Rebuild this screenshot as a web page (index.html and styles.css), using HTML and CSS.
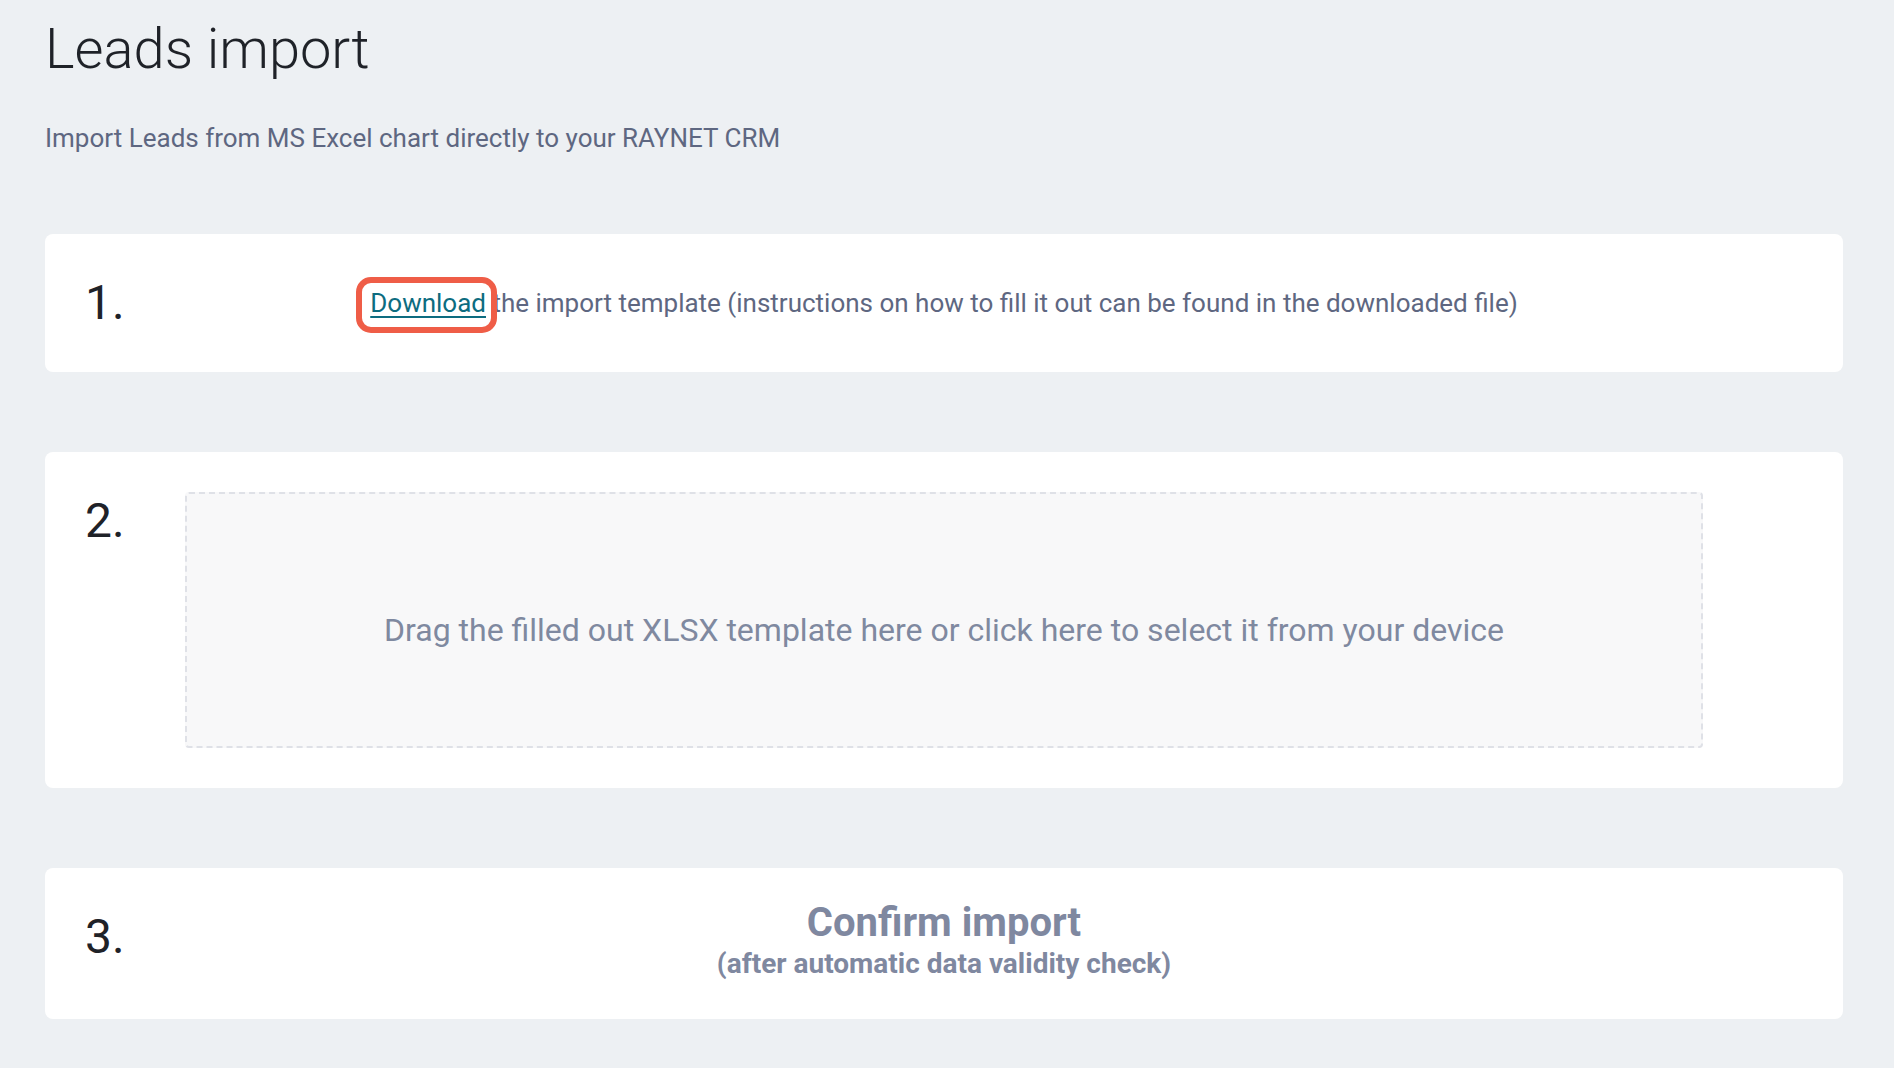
FILE: index.html
```html
<!DOCTYPE html>
<html lang="en">
<head>
<meta charset="utf-8">
<title>Leads import</title>
<link rel="stylesheet" href="styles.css">
</head>
<body>
<main class="page">
  <h1 class="title">Leads import</h1>
  <p class="subtitle">Import Leads from MS Excel chart directly to your RAYNET CRM</p>

  <section class="card card-download">
    <div class="step">1.</div>
    <div class="content">
      <p class="download-text"><span class="highlight"><a class="link" href="#">Download</a></span> the import template (instructions on how to fill it out can be found in the downloaded file)</p>
    </div>
  </section>

  <section class="card card-upload">
    <div class="step">2.</div>
    <div class="content">
      <div class="dropzone">Drag the filled out XLSX template here or click here to select it from your device</div>
    </div>
  </section>

  <section class="card card-confirm">
    <div class="step">3.</div>
    <div class="content confirm">
      <div class="confirm-title">Confirm import</div>
      <div class="confirm-sub">(after automatic data validity check)</div>
    </div>
  </section>
</main>
</body>
</html>
```

FILE: styles.css
```css
*, *::before, *::after { box-sizing: border-box; }

html, body {
  margin: 0;
  padding: 0;
  background: #edf0f3;
}

body {
  font-family: Roboto, "Liberation Sans", Arial, sans-serif;
  color: #5e6781;
}

.page {
  padding: 21px 51px 40px 45px;
}

.title {
  margin: 0;
  font-size: 56px;
  line-height: 56px;
  font-weight: 300;
  color: #1f2228;
  letter-spacing: 0;
}

.subtitle {
  margin: 48px 0 0;
  font-size: 26px;
  line-height: 26px;
  color: #5e6781;
}

.card {
  display: grid;
  grid-template-columns: 100px 1fr 100px;
  background: #ffffff;
  border-radius: 8px;
  padding: 40px 40px;
}

.card-download {
  margin-top: 83px;
}

.card-upload {
  margin-top: 80px;
}

.card-confirm {
  margin-top: 80px;
}

.step {
  margin-top: 5px;
  font-size: 48px;
  line-height: 48px;
  color: #1f2228;
}

.content {
  grid-column: 2;
  min-width: 0;
}

.download-text {
  margin: 0;
  text-align: center;
  font-size: 26px;
  line-height: 58px;
  color: #5e6781;
}

.highlight {
  position: relative;
  display: inline-block;
}

.highlight::after {
  content: "";
  position: absolute;
  left: -14px;
  right: -11px;
  top: 3px;
  bottom: -1px;
  border: 6px solid #ef5d47;
  border-radius: 15px;
  pointer-events: none;
}

.link {
  color: #0d6c80;
  text-decoration: underline;
  text-decoration-thickness: 2px;
  text-underline-offset: 4px;
}

.dropzone {
  height: 256px;
  display: flex;
  align-items: center;
  justify-content: center;
  padding-top: 20px;
  background: #f8f8f9;
  border: 2px dashed #dfe1e7;
  border-radius: 4px;
  font-size: 32px;
  line-height: 32px;
  color: #7f89a0;
  text-align: center;
}

.confirm {
  margin-top: -3px;
  text-align: center;
  color: #7f88a0;
  font-weight: 700;
}

.confirm-title {
  font-size: 40px;
  line-height: 36px;
}

.confirm-sub {
  margin-top: 7px;
  font-size: 28px;
  line-height: 31px;
}
```
